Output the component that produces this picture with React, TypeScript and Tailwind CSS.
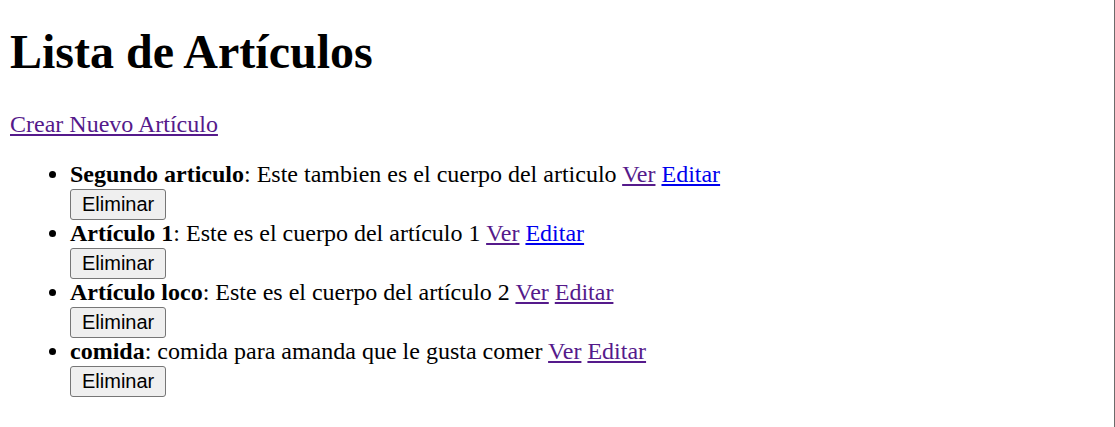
import React from "react";

type Articulo = {
  titulo: string;
  cuerpo: string;
  verVisto: boolean;
  editarVisto: boolean;
};

const articulos: Articulo[] = [
  { titulo: "Segundo articulo", cuerpo: "Este tambien es el cuerpo del articulo", verVisto: true, editarVisto: false },
  { titulo: "Artículo 1", cuerpo: "Este es el cuerpo del artículo 1", verVisto: true, editarVisto: false },
  { titulo: "Artículo loco", cuerpo: "Este es el cuerpo del artículo 2", verVisto: true, editarVisto: true },
  { titulo: "comida", cuerpo: "comida para amanda que le gusta comer", verVisto: true, editarVisto: true },
];

function Enlace({ visto, children }: { visto: boolean; children: React.ReactNode }) {
  return (
    <a href="#" className={visto ? "underline text-[#551a8b]" : "underline text-[#0000ee]"}>
      {children}
    </a>
  );
}

export default function App() {
  return (
    <div className="flex h-[427px] bg-white text-black font-['Liberation_Serif',serif] text-[24px] leading-[normal]">
      <div className="flex-1 px-[10px] pt-[24px]">
        <h1 className="text-[48px] font-bold leading-[normal]">Lista de Artículos</h1>
        <p className="mt-[32px]">
          <Enlace visto>Crear Nuevo Artículo</Enlace>
        </p>
        <ul className="list-disc pl-[60px] mt-[23px]">
          {articulos.map((a) => (
            <li key={a.titulo}>
              <strong>{a.titulo}</strong>: {a.cuerpo} <Enlace visto={a.verVisto}>Ver</Enlace>{" "}
              <Enlace visto={a.editarVisto}>Editar</Enlace>
              <form className="flex pt-[1px]">
                <button
                  type="button"
                  className="h-[31px] font-['Liberation_Sans',sans-serif] text-[20px] leading-[normal] bg-[#efefef] border border-[#767676] rounded-[3px] px-[11px] text-black"
                >
                  Eliminar
                </button>
              </form>
            </li>
          ))}
        </ul>
      </div>
      <div className="w-px bg-[#6b6b6b]" />
    </div>
  );
}
